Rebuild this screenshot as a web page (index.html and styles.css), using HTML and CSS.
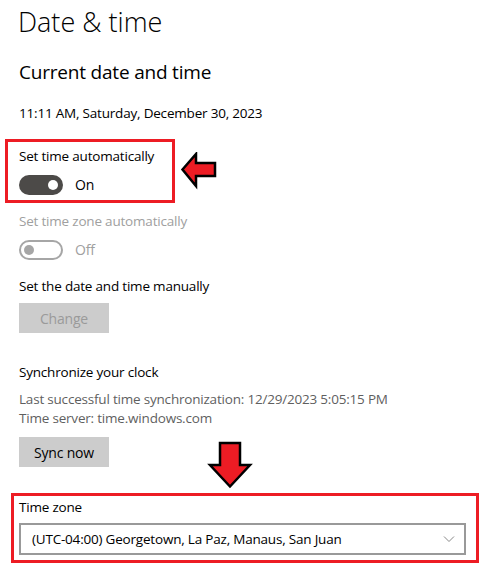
FILE: index.html
```html
<!DOCTYPE html>
<html lang="en">
<head>
    <meta charset="UTF-8">
    <meta name="viewport" content="width=device-width, initial-scale=1.0">
    <title>Date &amp; time</title>
    <link rel="stylesheet" href="styles.css">
</head>
<body>
    <div class="settings">
        <h1>Date &amp; time</h1>
        <h2>Current date and time</h2>
        <p class="now">11:11 AM, Saturday, December 30, 2023</p>

        <div class="mark mark-auto">
            <p class="label">Set time automatically</p>
            <div class="toggle-row">
                <span class="toggle on"><span class="knob"></span></span>
                <span class="state">On</span>
            </div>
        </div>

        <p class="label disabled zone-auto">Set time zone automatically</p>
        <div class="toggle-row">
            <span class="toggle off"><span class="knob"></span></span>
            <span class="state disabled">Off</span>
        </div>

        <p class="label manual">Set the date and time manually</p>
        <button class="btn" disabled>Change</button>

        <p class="label sync-title">Synchronize your clock</p>
        <p class="info">Last successful time synchronization: 12/29/2023 5:05:15 PM<br>Time server: time.windows.com</p>
        <button class="btn sync">Sync now</button>

        <div class="mark mark-zone">
            <p class="label">Time zone</p>
            <div class="select">
                <span>(UTC-04:00) Georgetown, La Paz, Manaus, San Juan</span>
                <svg class="chevron" width="12" height="8" viewBox="0 0 12 8">
                    <polyline points="1,1.5 6,6.5 11,1.5" fill="none" stroke="#888" stroke-width="1"/>
                </svg>
            </div>
        </div>
    </div>

    <!-- annotation arrows -->
    <svg class="arrow arrow-left" width="38" height="38" viewBox="0 0 38 38">
        <polygon points="2.5,17.5 16,2 16,11 35,11 35,24 16,24 16,34" fill="#ed1c24" stroke="#000" stroke-width="2.5" stroke-linejoin="miter"/>
    </svg>
    <svg class="arrow arrow-down" width="46" height="49" viewBox="0 0 46 49">
        <polygon points="13,2 33,2 33,24 43,24 23,45.5 3,24 13,24" fill="#ed1c24" stroke="#000" stroke-width="2.5" stroke-linejoin="miter"/>
    </svg>
</body>
</html>
```

FILE: styles.css
```css
body {
    margin: 0;
    background-color: #fff;
    color: #000;
    font-family: "Open Sans", "Noto Sans", sans-serif;
    font-size: 13.5px;
    letter-spacing: -0.2px;
}
p {
    margin: 0;
}
.settings {
    position: relative;
    display: flex;
    flex-direction: column;
    align-items: flex-start;
    padding: 0 19px;
}
h1 {
    margin: 0;
    font-size: 27px;
    font-weight: 300;
    line-height: 44px;
    margin-left: -1px;
    letter-spacing: 0;
}
h2 {
    margin: 14px 0 0;
    font-size: 19px;
    font-weight: 400;
    line-height: 28px;
    letter-spacing: -0.2px;
}
.now {
    margin-top: 17px;
    line-height: 20px;
}
.label {
    line-height: 20px;
}
.disabled {
    color: #a0a0a0;
}
.mark {
    border: 3px solid #ed1c24;
}
.mark-auto {
    margin: 16px 0 0 -14px;
    padding: 4px 0 5px 11px;
    width: 153px;
}
.toggle-row {
    display: flex;
    align-items: center;
    gap: 12px;
    margin-top: 9px;
    height: 20px;
}
.toggle {
    box-sizing: border-box;
    width: 44px;
    height: 20px;
    border-radius: 10px;
    display: flex;
    align-items: center;
    padding: 0 5px;
}
.toggle .knob {
    width: 10px;
    height: 10px;
    border-radius: 50%;
}
.toggle.on {
    background-color: #4c4a48;
    justify-content: flex-end;
}
.toggle.on .knob {
    background-color: #fff;
}
.toggle.off {
    border: 2px solid #a6a6a6;
    padding: 0 3px;
}
.toggle.off .knob {
    background-color: #a6a6a6;
}
.state {
    line-height: 20px;
    font-size: 14px;
}
.zone-auto {
    margin-top: 8px;
}
.manual {
    margin-top: 16px;
}
.btn {
    width: 90px;
    height: 30px;
    border: none;
    background-color: #cccccc;
    font-family: inherit;
    font-size: 14px;
    letter-spacing: -0.2px;
    color: #000;
    padding: 0;
    margin-top: 7px;
}
.btn:disabled {
    color: #9a9a9a;
}
.sync-title {
    margin-top: 29px;
}
.info {
    margin-top: 8px;
    line-height: 19px;
    color: #5f5f5f;
}
.sync {
    margin-top: 9px;
}
.mark-zone {
    margin: 26px 0 0 -8px;
    padding: 1px 10px 5px 5px;
    align-self: stretch;
    margin-right: 1px;
}
.select {
    margin-top: 6px;
    box-sizing: border-box;
    height: 32px;
    border: 2px solid #999;
    display: flex;
    align-items: center;
    justify-content: space-between;
    padding: 0 9px 0 11px;
}
.chevron {
    display: block;
}
.arrow {
    position: absolute;
}
.arrow-left {
    left: 180px;
    top: 152px;
}
.arrow-down {
    left: 207px;
    top: 441px;
}
```
